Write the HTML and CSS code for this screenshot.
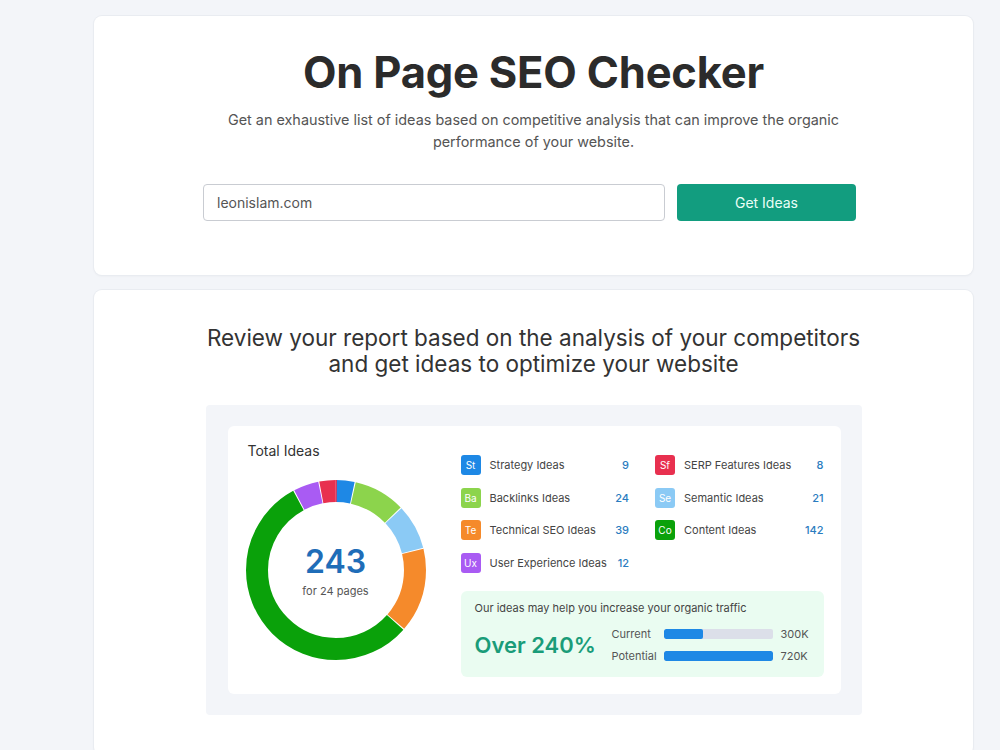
FILE: index.html
```html
<!DOCTYPE html>
<html lang="en">
<head>
    <meta charset="UTF-8">
    <meta name="viewport" content="width=device-width, initial-scale=1.0">
    <title>On Page SEO Checker</title>
    <link rel="stylesheet" href="styles.css">
</head>
<body>
    <div class="page">
        <section class="card hero">
            <h1>On Page SEO Checker</h1>
            <p class="lead">Get an exhaustive list of ideas based on competitive analysis that can improve the organic performance of your website.</p>
            <form class="check-form">
                <input type="text" class="domain-input" value="leonislam.com">
                <button type="button" class="get-btn">Get Ideas</button>
            </form>
        </section>

        <section class="card report">
            <h2>Review your report based on the analysis of your competitors<br>and get ideas to optimize your website</h2>
            <div class="preview">
                <div class="preview-card">
                    <div class="total">
                        <div class="total-title">Total Ideas</div>
                        <div class="donut">
                            <!-- ring segments: strategy, backlinks, semantic, technical, content, ux, serp -->
                            <svg width="180" height="180" viewBox="0 0 180 180">
                                <g transform="rotate(-90 90 90)" fill="none" stroke-width="22">
                                    <circle cx="90" cy="90" r="79" stroke="#1e88e5" stroke-dasharray="16.5 480" stroke-dashoffset="0"/>
                                    <circle cx="90" cy="90" r="79" stroke="#8cd44c" stroke-dasharray="45.7 480" stroke-dashoffset="-17.52"/>
                                    <circle cx="90" cy="90" r="79" stroke="#8bcaf5" stroke-dasharray="39.9 480" stroke-dashoffset="-64.24"/>
                                    <circle cx="90" cy="90" r="79" stroke="#f58a2b" stroke-dasharray="74.9 480" stroke-dashoffset="-105.12"/>
                                    <circle cx="90" cy="90" r="79" stroke="#0aa10a" stroke-dasharray="275.4 480" stroke-dashoffset="-181.04"/>
                                    <circle cx="90" cy="90" r="79" stroke="#a95bf3" stroke-dasharray="22.4 480" stroke-dashoffset="-457.45"/>
                                    <circle cx="90" cy="90" r="79" stroke="#e8304f" stroke-dasharray="14.6 480" stroke-dashoffset="-480.81"/>
                                </g>
                            </svg>
                            <div class="donut-label">
                                <div class="donut-num">243</div>
                                <div class="donut-sub">for 24 pages</div>
                            </div>
                        </div>
                    </div>

                    <div class="details">
                        <ul class="legend">
                            <li><span class="tag st">St</span><span class="name">Strategy Ideas</span><span class="count">9</span></li>
                            <li><span class="tag sf">Sf</span><span class="name">SERP Features Ideas</span><span class="count">8</span></li>
                            <li><span class="tag ba">Ba</span><span class="name">Backlinks Ideas</span><span class="count">24</span></li>
                            <li><span class="tag se">Se</span><span class="name">Semantic Ideas</span><span class="count">21</span></li>
                            <li><span class="tag te">Te</span><span class="name">Technical SEO Ideas</span><span class="count">39</span></li>
                            <li><span class="tag co">Co</span><span class="name">Content Ideas</span><span class="count">142</span></li>
                            <li><span class="tag ux">Ux</span><span class="name">User Experience Ideas</span><span class="count">12</span></li>
                        </ul>

                        <div class="traffic">
                            <div class="traffic-note">Our ideas may help you increase your organic traffic</div>
                            <div class="traffic-row">
                                <div class="growth">Over 240%</div>
                                <div class="bars">
                                    <span class="bar-label">Current</span>
                                    <div class="bar"><div class="bar-fill" style="width: 36%"></div></div>
                                    <span class="bar-value">300K</span>
                                    <span class="bar-label">Potential</span>
                                    <div class="bar"><div class="bar-fill" style="width: 100%"></div></div>
                                    <span class="bar-value">720K</span>
                                </div>
                            </div>
                        </div>
                    </div>
                </div>
            </div>
        </section>
    </div>
</body>
</html>
```

FILE: styles.css
```css
body {
    margin: 0;
    background-color: #f3f5f9;
    font-family: Inter, "Noto Sans", Arial, sans-serif;
    color: #333;
}
.page {
    width: 879px;
    margin-left: 94px;
    padding-top: 16px;
}
.card {
    background-color: white;
    border-radius: 8px;
    box-shadow: 0 0 0 1px #e9ecf1, 0 1px 3px rgba(0,0,0,0.05);
    text-align: center;
}
.hero {
    padding: 30px 0 54px;
}
h1 {
    margin: 0;
    font-size: 43.5px;
    line-height: 52px;
    font-weight: 700;
    color: #2b2b2b;
    letter-spacing: -0.2px;
}
.lead {
    width: 660px;
    margin: 11px auto 0;
    font-size: 14.4px;
    line-height: 22px;
    color: #555;
}
.check-form {
    display: flex;
    justify-content: center;
    gap: 12px;
    margin-top: 31px;
    padding-right: 8px;
}
.domain-input {
    width: 462px;
    height: 37px;
    box-sizing: border-box;
    border: 1px solid #c9ccd2;
    border-radius: 4px;
    padding: 0 13px;
    font-family: inherit;
    font-size: 14px;
    color: #555;
}
.get-btn {
    width: 179px;
    height: 37px;
    border: none;
    border-radius: 4px;
    background-color: #129d7f;
    color: #eafff7;
    font-family: inherit;
    font-size: 14px;
    cursor: pointer;
}
.report {
    margin-top: 15px;
    padding: 35px 0 40px;
}
h2 {
    margin: 0 auto;
    font-size: 22.5px;
    line-height: 26px;
    font-weight: 400;
    color: #333;
}
.preview {
    width: 656px;
    box-sizing: border-box;
    margin: 28px auto 0;
    padding: 21px 21px 21px 22px;
    background-color: #f3f5f9;
    border-radius: 4px;
}
.preview-card {
    display: flex;
    height: 268px;
    box-sizing: border-box;
    padding: 16px 17px 0 18px;
    background-color: white;
    border-radius: 6px;
    text-align: left;
}
.total {
    width: 180px;
}
.total-title {
    margin-left: 2px;
    font-size: 14px;
    line-height: 18px;
    color: #333;
}
.donut {
    position: relative;
    width: 180px;
    height: 180px;
    margin-top: 20px;
}
.donut svg {
    display: block;
}
.donut-label {
    position: absolute;
    inset: 0;
    display: flex;
    flex-direction: column;
    align-items: center;
    justify-content: center;
    padding-top: 2px;
}
.donut-num {
    font-size: 32px;
    line-height: 36px;
    font-weight: 600;
    color: #1f6db8;
}
.donut-sub {
    margin-top: 4px;
    font-size: 11px;
    color: #555;
}
.details {
    width: 363px;
    margin-left: 35px;
    padding-top: 13px;
}
.legend {
    display: grid;
    grid-template-columns: 1fr 1fr;
    column-gap: 26px;
    row-gap: 12.5px;
    margin: 0;
    padding: 0;
    list-style: none;
}
.legend li {
    display: flex;
    align-items: center;
    height: 20px;
    font-size: 11px;
    color: #444;
}
.tag {
    width: 20px;
    height: 20px;
    border-radius: 3px;
    margin-right: 9px;
    display: flex;
    align-items: center;
    justify-content: center;
    font-size: 10px;
    color: white;
}
.tag.st { background-color: #1e88e5; }
.tag.sf { background-color: #e8304f; }
.tag.ba { background-color: #8cd44c; }
.tag.se { background-color: #8bcaf5; }
.tag.te { background-color: #f58a2b; }
.tag.co { background-color: #0aa10a; }
.tag.ux { background-color: #a95bf3; }
.name {
    flex: 1;
}
.count {
    color: #2a7cc0;
    font-weight: 500;
}
.traffic {
    margin-top: 18.5px;
    height: 86px;
    box-sizing: border-box;
    padding: 9px 14px 0;
    background-color: #eafcf1;
    border-radius: 6px;
}
.traffic-note {
    font-size: 11px;
    line-height: 16px;
    color: #444;
}
.traffic-row {
    display: flex;
    align-items: center;
    margin-top: 8px;
}
.growth {
    width: 137px;
    flex-shrink: 0;
    font-size: 22px;
    font-weight: 600;
    color: #1a9c79;
}
.bars {
    display: grid;
    grid-template-columns: 44px 109px auto;
    column-gap: 8px;
    row-gap: 2px;
    align-items: center;
    font-size: 11px;
    color: #555;
}
.bar-label, .bar-value {
    line-height: 20px;
}
.bar {
    height: 10px;
    background-color: #dcdfe9;
    border-radius: 2px;
    overflow: hidden;
}
.bar-fill {
    height: 100%;
    background-color: #1e88e5;
    border-radius: 2px;
}
```
